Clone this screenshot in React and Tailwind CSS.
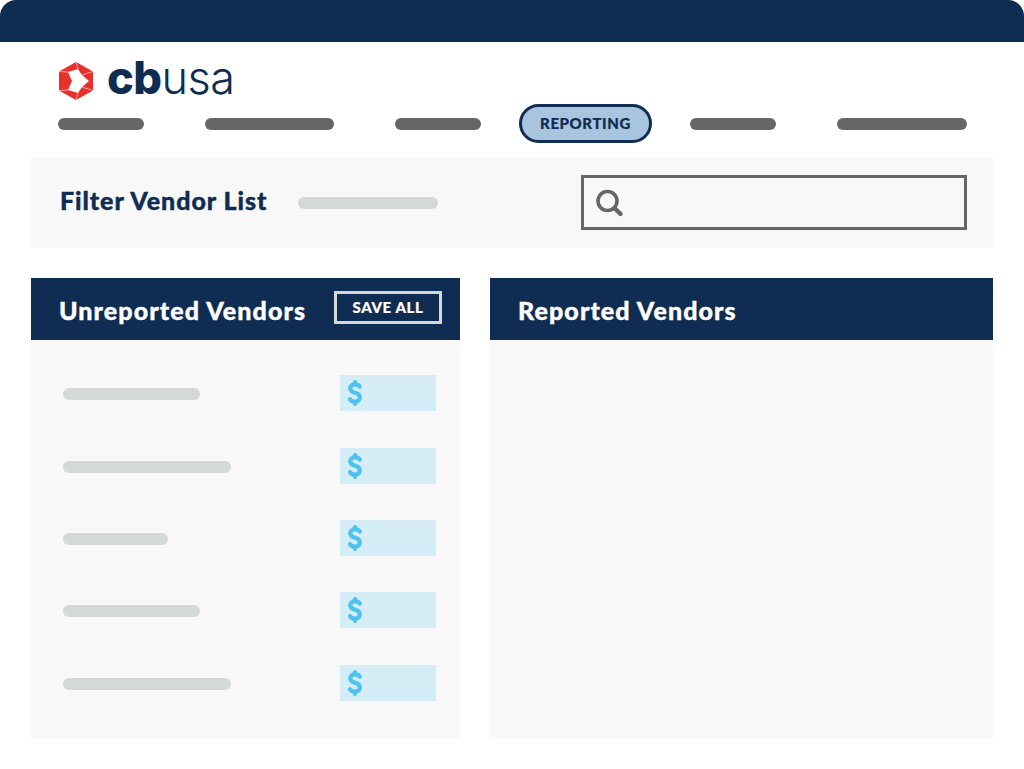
const font = { fontFamily: '"Lato", "Liberation Sans", sans-serif' };

function Hex() {
  return (
    <svg width="34" height="38" viewBox="0 0 34 38" className="block">
      <polygon points="17,0 34,9.5 34,28.5 17,38 0,28.5 0,9.5" fill="#e8312a" />
      <path d="M17 0L19 7M34 9.5L23 13M34 28.5L23 25M17 38L19 31M0 28.5L9 28M0 9.5L9 10" stroke="#f9c4c0" strokeWidth="0.8" fill="none" />
      <polygon points="19,7 23,13 30,19 23,25 19,31 9,28 13,19 9,10" fill="#ffffff" />
    </svg>
  );
}

function Dollar() {
  return (
    <svg width="16" height="28" viewBox="0 0 16 28" fill="none" stroke="#4fc3f0" strokeWidth="4.2" strokeLinecap="round" strokeLinejoin="round">
      <path d="M12.8 7.6C12 6 10.2 5.4 8 5.4C5.2 5.4 3.2 6.8 3.2 9.2C3.2 11.8 5.4 13 8 13.8C10.8 14.6 12.9 15.8 12.9 18.6C12.9 21.2 10.8 22.6 8 22.6C5.6 22.6 3.9 21.9 3 20.2" />
      <path d="M8 3V5M8 23V25" />
    </svg>
  );
}

function Row({ w }) {
  return (
    <div className="flex items-center justify-between h-9">
      <div className="h-3 mt-[2px] rounded-full bg-[#d5d8d8]" style={{ width: w }} />
      <div className="w-24 h-9 bg-[#d4edf7] flex items-center pl-[7px]">
        <Dollar />
      </div>
    </div>
  );
}

const Bar = ({ className }) => <div className={`h-3 rounded-full bg-[#666666] ${className}`} />;

export default function App() {
  return (
    <div className="w-[1024px] h-[769px] bg-white overflow-hidden" style={font}>
      <div className="h-[42px] mb-px bg-[#0f2d52] rounded-t-[16px]" />
      <div className="pl-[59px] pt-[19px] h-[61px] flex items-start">
        <Hex />
        <div
          className="ml-[14px] -mt-[9px] text-[45px] leading-[50px] text-[#0f2d52] tracking-[-0.5px]"
          style={{ fontFamily: '"Inter", "Lato", sans-serif' }}
        >
          <span className="font-extrabold">cb</span><span className="font-light">usa</span>
        </div>
      </div>
      <div className="flex items-center pl-[58px] h-[39px]">
        <Bar className="w-[86px]" />
        <Bar className="w-[129px] ml-[61px]" />
        <Bar className="w-[86px] ml-[61px]" />
        <div className="w-[133px] h-[39px] ml-[38px] rounded-full border-[3px] border-[#0f2d52] bg-[#a9c4de] flex items-center justify-center text-[15px] font-black tracking-[0.6px] text-[#0f2d52] [-webkit-text-stroke:0.2px_#0f2d52]">
          REPORTING
        </div>
        <Bar className="w-[86px] ml-[38px]" />
        <Bar className="w-[130px] ml-[61px]" />
      </div>
      <div className="mx-[31px] mt-[15px] w-[962px] h-[90px] bg-[#f8f8f8] flex items-center pl-[29px] pr-[26px]">
        <div className="w-[238px] mb-[6px] text-[25px] font-black tracking-[0.95px] text-[#0f2d52] leading-none [-webkit-text-stroke:0.4px_#0f2d52]">Filter Vendor List</div>
        <div className="w-[140px] h-3 rounded-full bg-[#d5d8d8]" />
        <div className="ml-auto mb-px w-[386px] h-[55px] border-[3px] border-[#666666] flex items-center pl-[11px]">
          <svg width="30" height="30" viewBox="0 0 30 30" fill="none" stroke="#666666">
            <circle cx="12.5" cy="13" r="9.5" strokeWidth="3.6" />
            <path d="M20 20.5L25.5 26" strokeWidth="4.4" strokeLinecap="round" />
          </svg>
        </div>
      </div>
      <div className="mx-[31px] mt-[30px] flex gap-[30px] h-[460px]">
        <div className="w-[429px] bg-[#f8f8f8] flex flex-col">
          <div className="h-[62px] bg-[#0f2d52] flex items-center pl-[28px] relative">
            <span className="text-[25px] mt-[2px] font-black tracking-[1.1px] text-white leading-none [-webkit-text-stroke:0.4px_#ffffff]">Unreported Vendors</span>
            <div className="absolute left-[303px] top-[13px] w-[108px] h-[33px] border-[3px] border-[#d5d8d8] flex items-center justify-center text-[15px] font-black tracking-[0.6px] text-white [-webkit-text-stroke:0.2px_#ffffff]">
              SAVE ALL
            </div>
          </div>
          <div className="pl-[32px] pr-[24px] pt-[35.2px] flex flex-col gap-[36.4px]">
            <Row w={137} />
            <Row w={168} />
            <Row w={105} />
            <Row w={137} />
            <Row w={168} />
          </div>
        </div>
        <div className="w-[503px] bg-[#f8f8f8]">
          <div className="h-[62px] bg-[#0f2d52] flex items-center pl-[28px]">
            <span className="text-[25px] mt-[2px] font-black tracking-[1.1px] text-white leading-none [-webkit-text-stroke:0.4px_#ffffff]">Reported Vendors</span>
          </div>
        </div>
      </div>
    </div>
  );
}
